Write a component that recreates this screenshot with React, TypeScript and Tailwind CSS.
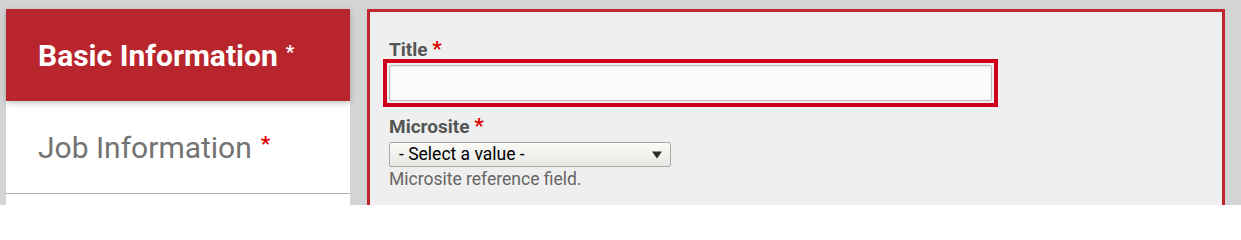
export default function App() {
  return (
    <div className="h-[205px] overflow-hidden bg-[#d3d4d6] pt-[9px] pl-[6px] pr-[16px] font-['Roboto',sans-serif]">
      <div className="flex h-full gap-[17px]">
        {/* vertical tabs */}
        <div className="w-[344px] shrink-0 bg-white">
          <div className="relative z-10 flex h-[92px] items-center bg-[#b8252c] pl-[32px] shadow-[0_2px_6px_rgba(0,0,0,0.25)]">
            <span className="text-[30px] font-bold text-white">Basic Information</span>
            <span className="ml-[8px] -mt-[6px] text-[19px] font-bold text-white">*</span>
          </div>
          <div className="flex h-[93px] items-center border-b border-[#b3b3ab] pl-[32px]">
            <span className="text-[30px] text-[#737373]">Job Information</span>
            <span className="ml-[9px] -mt-[4px] text-[21px] font-bold text-[#e00000]">*</span>
          </div>
        </div>

        {/* form panel */}
        <div className="flex-1 border-[3px] border-b-0 border-[#c1272d] bg-[#efefef] pt-[26px] pl-[19px]">
          <label className="block text-[19px] font-bold leading-[23px] text-[#555555]">
            Title <span className="text-[21px] text-[#e00000]">*</span>
          </label>
          <div className="-ml-[6px] -mt-[2px] w-[615px] border-[4px] border-[#d0021b] p-[2px]">
            <input
              type="text"
              className="block h-[36px] w-full rounded-[2px] border border-[#bbbbbb] bg-[#fbfbf9] shadow-[inset_0_1px_2px_rgba(0,0,0,0.08)] outline-none"
            />
          </div>
          <label className="mt-[8px] block text-[19px] font-bold leading-[23px] text-[#555555]">
            Microsite <span className="text-[21px] text-[#e00000]">*</span>
          </label>
          <div className="mt-[4px] flex h-[25px] w-[282px] items-center justify-between rounded-[2px] border border-[#a8a8a8] bg-gradient-to-b from-[#fafaf7] to-[#e8e8e4] pl-[9px] pr-[7px]">
            <span className="text-[17.5px] leading-none text-black">- Select a value -</span>
            <svg width="12" height="8" viewBox="0 0 12 8">
              <path d="M1 0.5 L11 0.5 L6 7.5 Z" fill="#2b2b2b" />
            </svg>
          </div>
          <p className="mt-[1px] text-[17.5px] leading-[22px] text-[#666666]">Microsite reference field.</p>
        </div>
      </div>
    </div>
  );
}
